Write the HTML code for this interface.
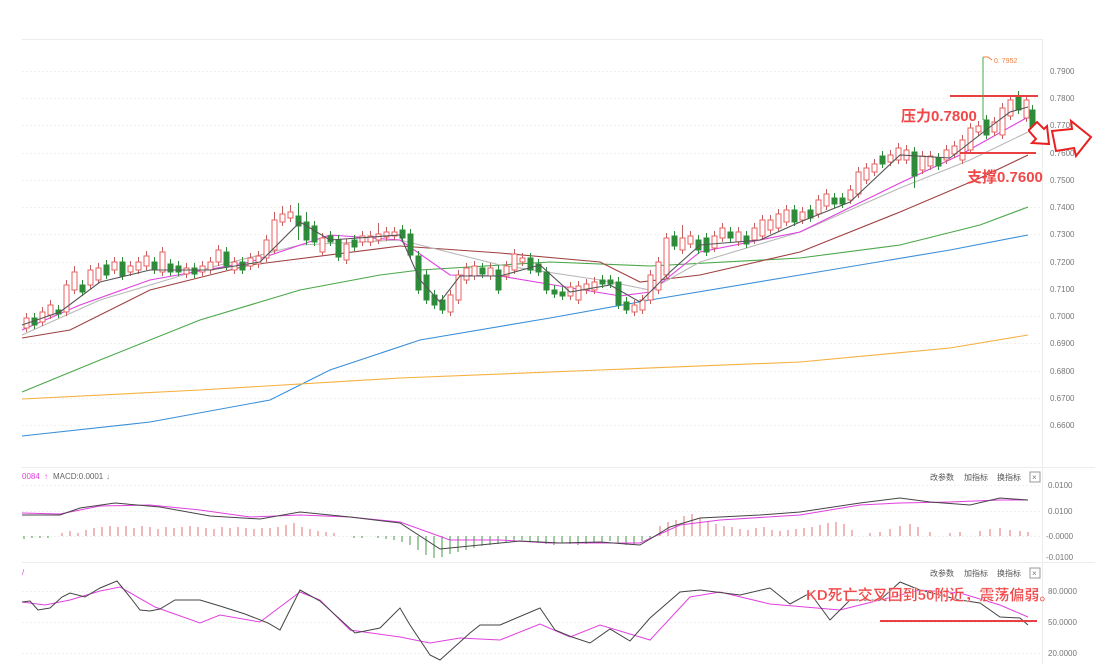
<!DOCTYPE html><html><head><meta charset="utf-8"><style>
html,body{margin:0;padding:0;background:#fff;width:1095px;height:664px;overflow:hidden}
svg{display:block}
text{font-family:"Liberation Sans","Noto Sans CJK SC",sans-serif}
.u{fill:#fff;stroke:#e86060;stroke-width:1}
.d{fill:#2e8b3a;stroke:#2e8b3a;stroke-width:1}
</style></head><body>
<svg width="1095" height="664" viewBox="0 0 1095 664" xmlns="http://www.w3.org/2000/svg">
<g stroke="#ececec" stroke-width="1">
<line x1="22" y1="39.5" x2="1042" y2="39.5"/>
<line x1="1042.5" y1="39" x2="1042.5" y2="664"/>
<line x1="22" y1="467.5" x2="1095" y2="467.5"/>
<line x1="22" y1="562.5" x2="1095" y2="562.5"/>
</g>
<g stroke="#f0f0f0" stroke-width="1" stroke-dasharray="2,2">
<line x1="22" y1="71.5" x2="1042" y2="71.5"/><line x1="22" y1="98.5" x2="1042" y2="98.5"/><line x1="22" y1="125.5" x2="1042" y2="125.5"/><line x1="22" y1="153.5" x2="1042" y2="153.5"/><line x1="22" y1="180.5" x2="1042" y2="180.5"/><line x1="22" y1="207.5" x2="1042" y2="207.5"/><line x1="22" y1="234.5" x2="1042" y2="234.5"/><line x1="22" y1="262.5" x2="1042" y2="262.5"/><line x1="22" y1="289.5" x2="1042" y2="289.5"/><line x1="22" y1="316.5" x2="1042" y2="316.5"/><line x1="22" y1="343.5" x2="1042" y2="343.5"/><line x1="22" y1="371.5" x2="1042" y2="371.5"/><line x1="22" y1="398.5" x2="1042" y2="398.5"/><line x1="22" y1="425.5" x2="1042" y2="425.5"/>
<line x1="22" y1="485.5" x2="1042" y2="485.5"/><line x1="22" y1="511.5" x2="1042" y2="511.5"/><line x1="22" y1="536.5" x2="1042" y2="536.5"/>
<line x1="22" y1="591.5" x2="1042" y2="591.5"/><line x1="22" y1="622.5" x2="1042" y2="622.5"/><line x1="22" y1="653.5" x2="1042" y2="653.5"/>
</g>
<g font-size="8" fill="#777">
<text x="1050" y="74">0.7900</text><text x="1050" y="101">0.7800</text><text x="1050" y="128">0.7700</text><text x="1050" y="156">0.7600</text><text x="1050" y="183">0.7500</text><text x="1050" y="210">0.7400</text><text x="1050" y="237">0.7300</text><text x="1050" y="265">0.7200</text><text x="1050" y="292">0.7100</text><text x="1050" y="319">0.7000</text><text x="1050" y="346">0.6900</text><text x="1050" y="374">0.6800</text><text x="1050" y="401">0.6700</text><text x="1050" y="428">0.6600</text>
<text x="1048" y="488">0.0100</text><text x="1048" y="514">0.0100</text><text x="1046" y="539">-0.0000</text><text x="1046" y="560">-0.0100</text>
<text x="1048" y="594">80.0000</text><text x="1048" y="625">50.0000</text><text x="1048" y="656">20.0000</text>
</g>
<g font-size="8" fill="#555">
<text x="930" y="480">改参数</text><text x="964" y="480">加指标</text><text x="997" y="480">换指标</text>
<rect x="1030" y="472" width="10" height="10" fill="none" stroke="#999"/><text x="1032" y="480" fill="#777">×</text>
<text x="930" y="576">改参数</text><text x="964" y="576">加指标</text><text x="997" y="576">换指标</text>
<rect x="1030" y="568" width="10" height="10" fill="none" stroke="#999"/><text x="1032" y="576" fill="#777">×</text>
<text x="22" y="479" fill="#e040e0">0084</text><text x="44" y="479" fill="#e040e0">↑</text><text x="53" y="479" fill="#666">MACD:0.0001</text><text x="106" y="479" fill="#888">↓</text>
<text x="22" y="575" fill="#e040e0">/</text>
</g>
<g fill="none" stroke-width="1.1">
<polyline stroke="#3a8fd8" points="22,436 150,422 270,400 330,370 420,340 550,318 650,300 800,275 950,250 1028,235"/>
<polyline stroke="#f5b040" points="22,399 200,390 400,378 600,370 800,362 950,348 1028,335"/>
<polyline stroke="#4aa84a" points="22,392 100,360 200,320 300,290 380,275 420,270 550,262 650,266 800,258 900,245 980,225 1028,207"/>
<polyline stroke="#a04040" points="22,338 70,330 150,290 250,265 400,246 500,253 600,262 640,282 700,275 800,252 900,212 980,178 1028,155"/>
<polyline stroke="#b8b8b8" points="22,335 100,300 200,270 300,245 400,240 500,265 600,280 650,290 700,262 800,232 900,188 970,160 1028,132"/>
<polyline stroke="#e040e0" points="22,330 80,305 150,280 250,262 330,235 400,240 450,275 500,276 560,286 620,296 650,292 700,252 800,232 900,183 960,155 1028,117"/>
</g>
<path fill="none" stroke="#c06060" stroke-width="1" d="M26.5 313V332M42.5 307V326M50.5 300V319M66.5 280V316M74.5 266V294M90.5 265V289M98.5 263V284M114.5 257V274M130.5 261V276M138.5 257V274M146.5 251V270M162.5 247V276M186.5 263V278M202.5 261V276M210.5 257V274M218.5 245V266M234.5 257V274M250.5 253V270M258.5 251V268M266.5 235V262M274.5 212V254M282.5 206V226M290.5 205V222M322.5 233V256M346.5 239V264M362.5 231V246M370.5 231V246M378.5 223V244M386.5 227V241M394.5 227V240M450.5 290V316M458.5 270V304M466.5 263V284M474.5 261V280M490.5 263V280M506.5 261V280M514.5 249V274M522.5 253V266M570.5 282V300M578.5 281V304M586.5 279V294M594.5 277V294M634.5 300V316M642.5 295V314M650.5 270V304M658.5 257V294M666.5 233V279M682.5 225V254M690.5 231V248M714.5 231V252M722.5 223V242M738.5 227V246M754.5 223V244M762.5 215V240M770.5 215V234M778.5 209V232M786.5 205V226M802.5 207V224M818.5 195V218M826.5 189V210M850.5 185V204M858.5 167V198M866.5 163V184M874.5 159V176M890.5 150V166M898.5 143V164M906.5 145V164M922.5 151V174M930.5 151V170M946.5 145V164M954.5 141V158M962.5 135V164M970.5 123V154M978.5 121V136M994.5 117V136M1002.5 103V139M1010.5 95V120M1026.5 95V122"/>
<path fill="none" stroke="#2e8b3a" stroke-width="1" d="M34.5 313V329M58.5 305V318M82.5 280V296M106.5 260V279M122.5 257V280M154.5 257V274M170.5 259V276M178.5 261V276M194.5 263V278M226.5 247V270M242.5 257V274M298.5 203V240M306.5 212V245M314.5 221V246M330.5 231V246M338.5 235V261M354.5 235V251M402.5 225V242M410.5 229V259M418.5 251V294M426.5 270V304M434.5 290V309M442.5 295V314M482.5 263V278M498.5 265V294M530.5 253V274M538.5 259V276M546.5 267V294M554.5 285V298M562.5 287V300M602.5 275V288M610.5 275V288M618.5 277V309M626.5 297V314M674.5 231V250M698.5 235V254M706.5 233V256M730.5 227V242M746.5 231V248M794.5 205V226M810.5 205V222M834.5 193V208M842.5 193V208M882.5 151V168M914.5 147V188M938.5 153V170M986.5 115V139M1018.5 91V114M1032.5 105V134"/>
<g>
<rect class="u" x="24" y="318" width="5" height="10"/><rect class="d" x="32" y="318" width="5" height="7"/><rect class="u" x="40" y="312" width="5" height="10"/><rect class="u" x="48" y="305" width="5" height="10"/><rect class="d" x="56" y="310" width="5" height="4"/><rect class="u" x="64" y="285" width="5" height="27"/><rect class="u" x="72" y="272" width="5" height="18"/><rect class="d" x="80" y="285" width="5" height="7"/><rect class="u" x="88" y="270" width="5" height="15"/><rect class="u" x="96" y="268" width="5" height="12"/><rect class="d" x="104" y="265" width="5" height="10"/><rect class="u" x="112" y="262" width="5" height="8"/><rect class="d" x="120" y="262" width="5" height="14"/><rect class="u" x="128" y="266" width="5" height="6"/><rect class="u" x="136" y="262" width="5" height="8"/><rect class="u" x="144" y="256" width="5" height="10"/><rect class="d" x="152" y="262" width="5" height="8"/><rect class="u" x="160" y="252" width="5" height="20"/><rect class="d" x="168" y="264" width="5" height="8"/><rect class="d" x="176" y="266" width="5" height="6"/><rect class="u" x="184" y="268" width="5" height="6"/><rect class="d" x="192" y="268" width="5" height="6"/><rect class="u" x="200" y="266" width="5" height="6"/><rect class="u" x="208" y="262" width="5" height="8"/><rect class="u" x="216" y="250" width="5" height="12"/><rect class="d" x="224" y="252" width="5" height="14"/><rect class="u" x="232" y="262" width="5" height="8"/><rect class="d" x="240" y="262" width="5" height="8"/><rect class="u" x="248" y="258" width="5" height="8"/><rect class="u" x="256" y="256" width="5" height="8"/><rect class="u" x="264" y="240" width="5" height="18"/><rect class="u" x="272" y="220" width="5" height="30"/><rect class="u" x="280" y="214" width="5" height="8"/><rect class="u" x="288" y="212" width="5" height="6"/><rect class="d" x="296" y="216" width="5" height="10"/><rect class="d" x="304" y="222" width="5" height="18"/><rect class="d" x="312" y="226" width="5" height="16"/><rect class="u" x="320" y="238" width="5" height="14"/><rect class="d" x="328" y="236" width="5" height="6"/><rect class="d" x="336" y="240" width="5" height="17"/><rect class="u" x="344" y="244" width="5" height="16"/><rect class="d" x="352" y="240" width="5" height="7"/><rect class="u" x="360" y="236" width="5" height="6"/><rect class="u" x="368" y="236" width="5" height="6"/><rect class="u" x="376" y="234" width="5" height="6"/><rect class="u" x="384" y="232" width="5" height="5"/><rect class="u" x="392" y="232" width="5" height="4"/><rect class="d" x="400" y="230" width="5" height="8"/><rect class="d" x="408" y="234" width="5" height="21"/><rect class="d" x="416" y="256" width="5" height="34"/><rect class="d" x="424" y="275" width="5" height="25"/><rect class="d" x="432" y="295" width="5" height="10"/><rect class="d" x="440" y="300" width="5" height="10"/><rect class="u" x="448" y="295" width="5" height="17"/><rect class="u" x="456" y="275" width="5" height="25"/><rect class="u" x="464" y="268" width="5" height="12"/><rect class="u" x="472" y="266" width="5" height="10"/><rect class="d" x="480" y="268" width="5" height="6"/><rect class="u" x="488" y="268" width="5" height="8"/><rect class="d" x="496" y="270" width="5" height="20"/><rect class="u" x="504" y="266" width="5" height="10"/><rect class="u" x="512" y="254" width="5" height="16"/><rect class="u" x="520" y="258" width="5" height="4"/><rect class="d" x="528" y="258" width="5" height="12"/><rect class="d" x="536" y="264" width="5" height="8"/><rect class="d" x="544" y="272" width="5" height="18"/><rect class="d" x="552" y="290" width="5" height="4"/><rect class="d" x="560" y="292" width="5" height="4"/><rect class="u" x="568" y="287" width="5" height="9"/><rect class="u" x="576" y="286" width="5" height="14"/><rect class="u" x="584" y="284" width="5" height="6"/><rect class="u" x="592" y="282" width="5" height="8"/><rect class="d" x="600" y="280" width="5" height="4"/><rect class="d" x="608" y="280" width="5" height="4"/><rect class="d" x="616" y="282" width="5" height="23"/><rect class="d" x="624" y="302" width="5" height="8"/><rect class="u" x="632" y="305" width="5" height="7"/><rect class="u" x="640" y="300" width="5" height="10"/><rect class="u" x="648" y="275" width="5" height="25"/><rect class="u" x="656" y="262" width="5" height="28"/><rect class="u" x="664" y="238" width="5" height="37"/><rect class="d" x="672" y="236" width="5" height="10"/><rect class="u" x="680" y="238" width="5" height="12"/><rect class="u" x="688" y="236" width="5" height="8"/><rect class="d" x="696" y="240" width="5" height="10"/><rect class="d" x="704" y="238" width="5" height="14"/><rect class="u" x="712" y="236" width="5" height="12"/><rect class="u" x="720" y="228" width="5" height="10"/><rect class="d" x="728" y="232" width="5" height="6"/><rect class="u" x="736" y="232" width="5" height="10"/><rect class="d" x="744" y="236" width="5" height="8"/><rect class="u" x="752" y="228" width="5" height="12"/><rect class="u" x="760" y="220" width="5" height="16"/><rect class="u" x="768" y="220" width="5" height="10"/><rect class="u" x="776" y="214" width="5" height="14"/><rect class="u" x="784" y="210" width="5" height="12"/><rect class="d" x="792" y="210" width="5" height="12"/><rect class="u" x="800" y="212" width="5" height="8"/><rect class="d" x="808" y="210" width="5" height="8"/><rect class="u" x="816" y="200" width="5" height="14"/><rect class="u" x="824" y="194" width="5" height="12"/><rect class="d" x="832" y="198" width="5" height="6"/><rect class="d" x="840" y="198" width="5" height="6"/><rect class="u" x="848" y="190" width="5" height="10"/><rect class="u" x="856" y="172" width="5" height="22"/><rect class="u" x="864" y="168" width="5" height="12"/><rect class="u" x="872" y="164" width="5" height="8"/><rect class="d" x="880" y="156" width="5" height="8"/><rect class="u" x="888" y="155" width="5" height="7"/><rect class="u" x="896" y="148" width="5" height="12"/><rect class="u" x="904" y="150" width="5" height="10"/><rect class="d" x="912" y="152" width="5" height="24"/><rect class="u" x="920" y="156" width="5" height="14"/><rect class="u" x="928" y="156" width="5" height="10"/><rect class="d" x="936" y="158" width="5" height="8"/><rect class="u" x="944" y="150" width="5" height="10"/><rect class="u" x="952" y="146" width="5" height="8"/><rect class="u" x="960" y="140" width="5" height="20"/><rect class="u" x="968" y="128" width="5" height="22"/><rect class="u" x="976" y="126" width="5" height="6"/><rect class="d" x="984" y="120" width="5" height="15"/><rect class="u" x="992" y="122" width="5" height="10"/><rect class="u" x="1000" y="108" width="5" height="27"/><rect class="u" x="1008" y="100" width="5" height="16"/><rect class="d" x="1016" y="96" width="5" height="14"/><rect class="u" x="1024" y="100" width="5" height="18"/><rect class="d" x="1030" y="110" width="5" height="20"/>
</g>
<polyline fill="none" stroke="#555" stroke-width="1.1" points="22,325 60,312 100,282 150,270 210,270 260,262 300,222 330,240 400,235 420,280 440,302 460,276 500,276 540,265 570,292 610,285 640,302 670,272 700,245 760,240 800,222 850,202 900,155 950,158 990,127 1010,112 1028,107"/>
<!-- MACD -->
<path fill="none" stroke="#e07070" stroke-width="1" d="M62 536V533M70 536V531M78 536V533M86 536V530M94 536V528M102 536V527M110 536V526M118 536V527M126 536V526M134 536V528M142 536V526M150 536V527M158 536V529M166 536V527M174 536V528M182 536V527M190 536V526M198 536V527M206 536V528M214 536V529M222 536V527M230 536V528M238 536V527M246 536V528M254 536V529M262 536V528M270 536V528M278 536V527M286 536V525M294 536V523M302 536V527M310 536V529M318 536V531M326 536V532M334 536V533M660 536V526M668 536V522M676 536V520M684 536V516M692 536V514M700 536V518M708 536V522M716 536V524M724 536V526M732 536V527M740 536V529M748 536V530M756 536V528M764 536V527M772 536V530M780 536V531M788 536V530M796 536V529M804 536V528M812 536V527M820 536V525M828 536V523M836 536V522M844 536V524M852 536V530M870 536V533M880 536V532M890 536V529M900 536V526M910 536V524M918 536V527M930 536V532M950 536V533M960 536V532M980 536V531M990 536V529M1000 536V528M1010 536V530M1020 536V531M1028 536V532"/>
<path fill="none" stroke="#4a9a4a" stroke-width="1" d="M24 536V539M32 536V538M40 536V538M48 536V538M354 536V538M362 536V538M378 536V538M386 536V539M394 536V540M402 536V542M410 536V545M418 536V550M426 536V555M434 536V558M442 536V557M450 536V554M458 536V552M466 536V550M474 536V548M482 536V546M490 536V545M498 536V544M506 536V542M514 536V541M522 536V540M530 536V541M538 536V543M546 536V544M554 536V545M562 536V543M570 536V544M578 536V545M586 536V544M594 536V543M602 536V542M610 536V541M618 536V543M626 536V545M634 536V544M642 536V541M650 536V539"/>
<g fill="none" stroke-width="1">
<polyline stroke="#e040e0" points="22,513 60,514 100,506 150,505 200,510 250,517 300,515 350,517 400,522 450,540 500,540 550,543 600,543 640,543 680,525 720,520 800,515 860,505 900,503 950,502 1000,500 1028,500"/>
<polyline stroke="#444" points="22,515 60,515 80,508 115,503 160,507 210,516 260,519 300,512 350,517 400,523 440,549 480,545 520,541 560,543 600,542 640,545 670,527 700,518 760,515 800,512 860,503 900,498 930,502 970,505 1000,498 1028,500"/>
</g>
<!-- KD -->
<g fill="none" stroke-width="1">
<polyline stroke="#e040e0" points="22,602 45,605 70,600 100,591 120,587 155,607 200,623 220,615 260,622 300,592 320,600 350,630 400,637 430,643 460,638 500,640 540,624 570,637 600,625 650,640 690,597 720,592 770,604 840,610 880,600 920,590 960,593 1000,605 1028,617"/>
<polyline stroke="#444" points="22,602 30,601 38,610 50,608 62,597 70,593 85,597 100,588 117,581 130,597 140,610 150,611 160,609 175,600 200,600 220,606 245,614 268,623 280,630 300,590 320,601 355,633 380,628 400,608 410,625 430,655 440,660 470,633 480,625 500,625 540,608 555,630 572,637 590,643 610,629 630,641 650,618 680,592 700,590 740,595 770,588 790,604 810,593 830,620 850,600 880,600 900,582 920,590 960,600 980,603 1000,617 1020,618 1028,625"/>
</g>
<line x1="880" y1="621" x2="1037" y2="621" stroke="#e84040" stroke-width="2"/>
<text x="806" y="600" font-size="15" font-weight="bold" fill="#f04848" stroke="#fff" stroke-width="0.3">KD死亡交叉回到50附近，震荡偏弱。</text>
<!-- annotations -->
<line x1="950" y1="96" x2="1038" y2="96" stroke="#e84040" stroke-width="2"/>
<line x1="960" y1="153" x2="1036" y2="153" stroke="#e84040" stroke-width="2"/>
<text x="901" y="121" font-size="15" font-weight="bold" fill="#f04848">压力0.7800</text>
<text x="967" y="182" font-size="15" font-weight="bold" fill="#f04848">支撑0.7600</text>
<line x1="983" y1="57" x2="983" y2="120" stroke="#4aa84a"/>
<polyline points="983,57 988,57 992,60" fill="none" stroke="#f08040"/>
<text x="994" y="63" font-size="7" fill="#f08040">0. 7952</text>
<path d="M1029,130 L1037,122 L1044,129 L1047,126 L1049,144 L1032,143 L1036,139 L1029,131 Z" fill="#fff" stroke="#e82020" stroke-width="2"/>
<path d="M1052,131 L1072,129 L1071,121 L1091,137 L1076,156 L1074,148 L1056,151 Z" fill="#fff" stroke="#e82020" stroke-width="2"/>
</svg>
</body></html>
